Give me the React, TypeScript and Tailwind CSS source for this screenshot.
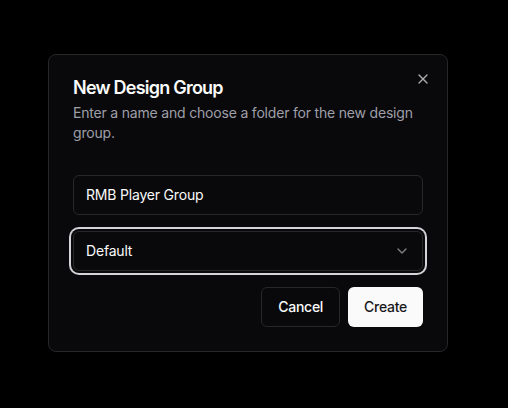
import { X, ChevronDown } from "lucide-react";

export default function App() {
  return (
    <div
      className="min-h-[408px] w-full bg-black pl-[48px] pt-[54px] tracking-[-0.012em]"
      style={{ fontFamily: "Inter, 'Noto Sans', sans-serif" }}
    >
      <div className="relative w-[400px] rounded-lg border border-zinc-800 bg-[#09090b] p-6 text-zinc-50">
        <button className="absolute right-4 top-4 rounded-sm text-zinc-300 opacity-80">
          <X className="h-4 w-4" strokeWidth={2} />
        </button>

        <div className="flex flex-col gap-1.5">
          <h2 className="text-lg font-semibold leading-none tracking-[-0.043em]">New Design Group</h2>
          <p className="text-sm leading-5 text-zinc-400">
            Enter a name and choose a folder for the new design group.
          </p>
        </div>

        <div className="mt-8 flex flex-col gap-4">
          <div className="flex h-10 items-center rounded-md border border-zinc-800 bg-[#09090b] px-3 text-sm text-zinc-50">
            RMB Player Group
          </div>
          <div className="flex h-10 items-center justify-between rounded-md border border-zinc-800 bg-[#09090b] px-3 text-sm text-zinc-50 ring-2 ring-zinc-300 ring-offset-2 ring-offset-[#09090b]">
            <span>Default</span>
            <ChevronDown className="h-4 w-4 opacity-50" />
          </div>
        </div>

        <div className="mt-4 flex justify-end gap-2">
          <button className="h-10 rounded-md border border-zinc-800 bg-[#09090b] px-4 text-sm font-medium tracking-[-0.02em] text-zinc-50">
            Cancel
          </button>
          <button className="h-10 rounded-md bg-zinc-50 px-4 text-sm font-medium tracking-[-0.02em] text-zinc-900">
            Create
          </button>
        </div>
      </div>
    </div>
  );
}
